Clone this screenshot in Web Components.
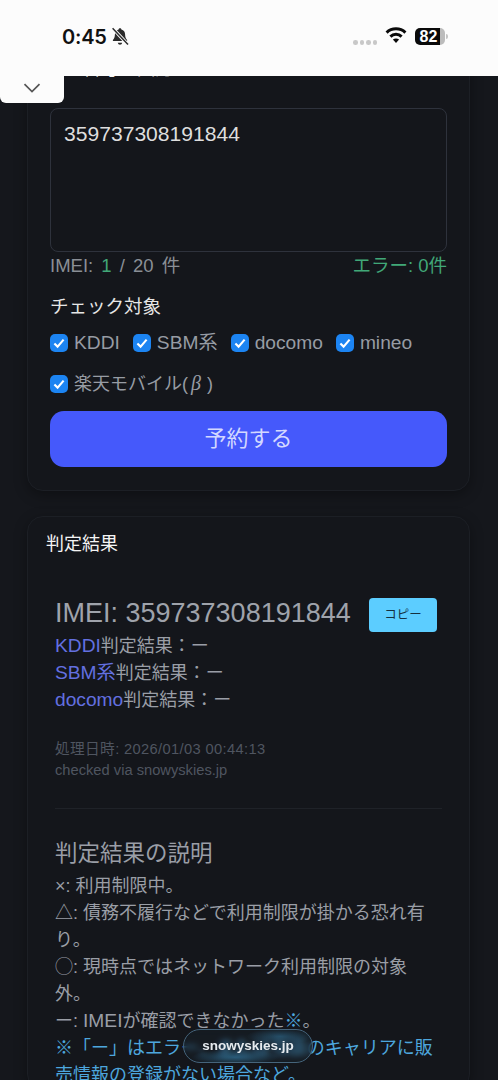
<!DOCTYPE html>
<html lang="ja">
<head>
<meta charset="utf-8">
<title>snowyskies.jp</title>
<style>
  html, body { margin: 0; height: 100%; background: #15171c; }
  body {
    font-family: "Liberation Sans", "Noto Sans CJK JP", sans-serif;
    overflow: hidden;
  }
</style>
</head>
<body>
<app-shell>
  <status-bar></status-bar>
  <imei-form></imei-form>
  <result-panel></result-panel>
</app-shell>

<script>
class AppShell extends HTMLElement {
  constructor() {
    super();
    this.attachShadow({ mode: "open" }).innerHTML = /* html */`
    <style>
      :host { display: flex; flex-direction: column; position: relative; width: 498px; height: 1080px; overflow: hidden; }
      main {
        flex: 1;
        min-height: 0;
        overflow: hidden;
        display: flex;
        flex-direction: column;
        gap: 25px;
        padding: 0 28px 0 27px;
      }
      ::slotted(imei-form) { margin-top: -35px; }
      collapse-tab { position: absolute; left: 0; top: 76px; }
      url-pill { position: absolute; left: 183px; top: 1029px; }
    </style>
    <slot name="bar"></slot>
    <main><slot></slot></main>
    <collapse-tab></collapse-tab>
    <url-pill>snowyskies.jp</url-pill>`;
  }
  connectedCallback() {
    this.querySelector("status-bar").slot = "bar";
  }
}

class StatusBar extends HTMLElement {
  constructor() {
    super();
    this.attachShadow({ mode: "open" }).innerHTML = /* html */`
    <style>
      :host {
        display: flex;
        flex: none;
        align-items: flex-start;
        height: 76px;
        box-sizing: border-box;
        padding: 26px 53px 0 62px;
        background: #fcfcfc;
        color: #111;
      }
      .time { font: 600 20px/22px Inter, "Liberation Sans", sans-serif; letter-spacing: -0.2px; }
      .bell { margin: 1px 0 0 4px; }
      .right { margin-left: auto; display: flex; align-items: flex-start; }
      .dots { display: flex; gap: 2px; margin: 14px 8px 0 0; }
      .dots i { width: 4.5px; height: 4.5px; border-radius: 50%; background: #c8c8c8; }
      .wifi { margin-right: 8px; }
      .battery {
        position: relative;
        display: flex;
        align-items: center;
        justify-content: center;
        width: 30px;
        height: 17px;
        margin-top: 2px;
        box-sizing: border-box;
        padding-right: 3px;
        border-radius: 5px;
        background: linear-gradient(to right, #0a0a0a 0 84%, #bcbcbc 84% 100%);
        color: #fff;
        font: 700 16px/17px "Liberation Sans", sans-serif;
      }
      .battery::after {
        content: "";
        position: absolute;
        right: -3px;
        top: 6px;
        width: 2px;
        height: 5px;
        border-radius: 0 2px 2px 0;
        background: #c4c4c4;
      }
    </style>
    <span class="time">0:45</span>
    <svg class="bell" width="18" height="19" viewBox="0 0 18 19">
      <path d="M9 1.2c.8 0 1.3.5 1.4 1.2 2.4.6 3.7 2.6 3.7 5.1 0 2.8.8 4.2 2 5.5v1H1.9v-1c1.2-1.3 2-2.7 2-5.5 0-2.5 1.3-4.5 3.7-5.1.1-.7.6-1.2 1.4-1.2z" fill="#2a2a2a"/>
      <path d="M6.8 15.8h4.4c-.2 1.2-1.1 2-2.2 2s-2-.8-2.2-2z" fill="#2a2a2a"/>
      <path d="M1.6 1.2 17 17.6" stroke="#fcfcfc" stroke-width="3.4"/>
      <path d="M1.6 1.2 17 17.6" stroke="#2a2a2a" stroke-width="1.5"/>
    </svg>
    <div class="right">
      <div class="dots"><i></i><i></i><i></i><i></i></div>
      <svg class="wifi" width="22" height="18" viewBox="0 0 22 18" fill="none" stroke="#0a0a0a" stroke-width="3">
        <path d="M1.6 6.6C6.8 1.6 15.2 1.6 20.4 6.6"/>
        <path d="M5.4 10.6c3.1-3 8.1-3 11.2 0"/>
        <path d="M11 17 7.9 13.6c1.7-1.6 4.5-1.6 6.2 0z" fill="#0a0a0a" stroke="none"/>
      </svg>
      <div class="battery">82</div>
    </div>`;
  }
}

class CollapseTab extends HTMLElement {
  constructor() {
    super();
    this.attachShadow({ mode: "open" }).innerHTML = /* html */`
    <style>
      :host {
        display: flex;
        align-items: center;
        justify-content: center;
        width: 64px;
        height: 27px;
        background: #fcfcfc;
        border-radius: 0 0 6px 6px;
      }
      svg { margin-bottom: 4px; }
    </style>
    <svg width="18" height="12" viewBox="0 0 18 12" fill="none" stroke="#555" stroke-width="1.7">
      <path d="M1.5 2.2 9 9.6l7.5-7.4"/>
    </svg>`;
  }
}

class PanelCard extends HTMLElement {
  constructor() {
    super();
    this.attachShadow({ mode: "open" }).innerHTML = /* html */`
    <style>
      :host {
        display: block;
        flex: none;
        border: 1px solid #1c1f25;
        border-radius: 16px;
        background: #14161b;
        box-shadow: 0 4px 14px #0005;
      }
      .title {
        margin: 0;
        padding-left: 18px;
        height: 54px;
        color: #f4f4f4;
        font-size: 18px;
        font-weight: 400;
        line-height: 54px;
      }
    </style>
    <h2 class="title"></h2>
    <slot></slot>`;
  }
  connectedCallback() {
    this.shadowRoot.querySelector(".title").textContent = this.getAttribute("heading");
  }
}

class CarrierCheck extends HTMLElement {
  constructor() {
    super();
    this.attachShadow({ mode: "open" }).innerHTML = /* html */`
    <style>
      :host {
        display: inline-flex;
        align-items: center;
        gap: 6px;
        height: 24px;
        color: #979ca4;
        font-size: 19.2px;
        line-height: 24px;
      }
      :host([cjk]) { font-size: 18px; }
      svg { flex: none; }
    </style>
    <svg width="18" height="18" viewBox="0 0 18 18">
      <rect width="18" height="18" rx="5" fill="#1c84f2"/>
      <path d="M4.4 9.4 7.6 12.6 13.6 5.6" fill="none" stroke="#fff" stroke-width="2.1"/>
    </svg>
    <span><slot></slot></span>`;
  }
}

class ImeiForm extends HTMLElement {
  constructor() {
    super();
    this.attachShadow({ mode: "open" }).innerHTML = /* html */`
    <style>
      :host { display: block; flex: none; }
      .body { padding: 12px 22px 23px 22px; }
      .input {
        height: 144px;
        box-sizing: border-box;
        padding: 12px 13px;
        border: 1px solid #2e323c;
        border-radius: 8px;
        color: #dedede;
        font-size: 21.1px;
        line-height: 26px;
      }
      .count {
        display: flex;
        justify-content: space-between;
        height: 28px;
        color: #8a8f96;
        font-size: 18.5px;
        line-height: 28px;
      }
      .count span:first-child { word-spacing: 3px; }
      .green { color: #41a878; }
      .label {
        margin-top: 13px;
        color: #e6e6e6;
        font-size: 18.5px;
        line-height: 28px;
      }
      .checks { display: flex; flex-wrap: wrap; gap: 17px 13px; margin-top: 10px; }
      .submit {
        display: flex;
        align-items: center;
        justify-content: center;
        height: 56px;
        margin-top: 15px;
        border-radius: 14px;
        background: #4559fb;
        color: #d3d8ff;
        font-size: 22px;
        line-height: 26px;
      }
      i { margin: 0 6px 0 3px; font-family: "Liberation Serif", serif; font-size: 20px; line-height: 1; }
    </style>
    <panel-card heading="IMEI番号を入力">
      <div class="body">
        <div class="input">359737308191844</div>
        <div class="count">
          <span>IMEI: <span class="green">1</span> / 20 件</span>
          <span class="green">エラー: 0件</span>
        </div>
        <div class="label">チェック対象</div>
        <div class="checks">
          <carrier-check>KDDI</carrier-check>
          <carrier-check>SBM系</carrier-check>
          <carrier-check>docomo</carrier-check>
          <carrier-check>mineo</carrier-check>
          <carrier-check cjk>楽天モバイル(<i>β</i>)</carrier-check>
        </div>
        <div class="submit">予約する</div>
      </div>
    </panel-card>`;
  }
}

class ResultPanel extends HTMLElement {
  constructor() {
    super();
    this.attachShadow({ mode: "open" }).innerHTML = /* html */`
    <style>
      :host { display: block; flex: none; }
      .body { padding: 27px 27px 0 27px; color: #9a9ea6; font-size: 18px; line-height: 27px; }
      .imei { display: flex; justify-content: space-between; align-items: center; height: 34px; margin-bottom: 1px; padding-right: 5px; }
      .imei span { margin-bottom: 4px; color: #9fa3ab; font-size: 27px; line-height: 30px; }
      .copy {
        display: flex;
        align-items: center;
        justify-content: center;
        width: 68px;
        height: 34px;
        border-radius: 4px;
        background: #5ccdff;
        color: #15303f;
        font-size: 12.5px;
      }
      .carrier { color: #6370e0; font-size: 19.2px; line-height: 1; }
      .latin { font-size: 19.2px; line-height: 1; }
      .meta { margin-top: 25px; color: #4f5560; font-size: 14.7px; line-height: 21px; }
      .meta span { letter-spacing: 0.35px; }
      hr { height: 1px; margin: 27px 0 0; border: 0; background: #1f2228; }
      h3 { margin: 30px 0 4px; color: #9a9ea6; font-size: 22.5px; font-weight: 400; line-height: 30px; }
      .note { color: #4da6dd; }
    </style>
    <panel-card heading="判定結果">
      <div class="body">
        <div class="imei"><span>IMEI: 359737308191844</span><div class="copy">コピー</div></div>
        <div><span class="carrier">KDDI</span>判定結果：ー</div>
        <div><span class="carrier">SBM系</span>判定結果：ー</div>
        <div><span class="carrier">docomo</span>判定結果：ー</div>
        <div class="meta"><span>処理日時: 2026/01/03 00:44:13</span><br>checked via snowyskies.jp</div>
        <hr>
        <h3>判定結果の説明</h3>
        <div>×: 利用制限中。</div>
        <div>△: 債務不履行などで利用制限が掛かる恐れ有り。</div>
        <div>◯: 現時点ではネットワーク利用制限の対象外。</div>
        <div>ー: <span class="latin">IMEI</span>が確認できなかった<span class="note">※</span>。</div>
        <div class="note">※「ー」はエラー、または当該のキャリアに販売情報の登録がない場合など。</div>
      </div>
    </panel-card>`;
  }
}

class UrlPill extends HTMLElement {
  constructor() {
    super();
    this.attachShadow({ mode: "open" }).innerHTML = /* html */`
    <style>
      :host {
        display: flex;
        align-items: center;
        justify-content: center;
        width: 130px;
        height: 34px;
        box-sizing: border-box;
        border: 1px solid #46657c;
        border-radius: 17px;
        background:
          radial-gradient(ellipse 44px 8px at 40% 85%, #3a90c088, transparent),
          radial-gradient(ellipse 34px 8px at 75% 20%, #3a90c066, transparent),
          #1b2a3644;
        -webkit-backdrop-filter: blur(3px);
        backdrop-filter: blur(3px);
        color: #e6ebef;
        font: 700 13.5px/1 "Liberation Sans", sans-serif;
      }
    </style>
    <slot></slot>`;
  }
}

customElements.define("panel-card", PanelCard);
customElements.define("carrier-check", CarrierCheck);
customElements.define("status-bar", StatusBar);
customElements.define("collapse-tab", CollapseTab);
customElements.define("imei-form", ImeiForm);
customElements.define("result-panel", ResultPanel);
customElements.define("url-pill", UrlPill);
customElements.define("app-shell", AppShell);
</script>
</body>
</html>
